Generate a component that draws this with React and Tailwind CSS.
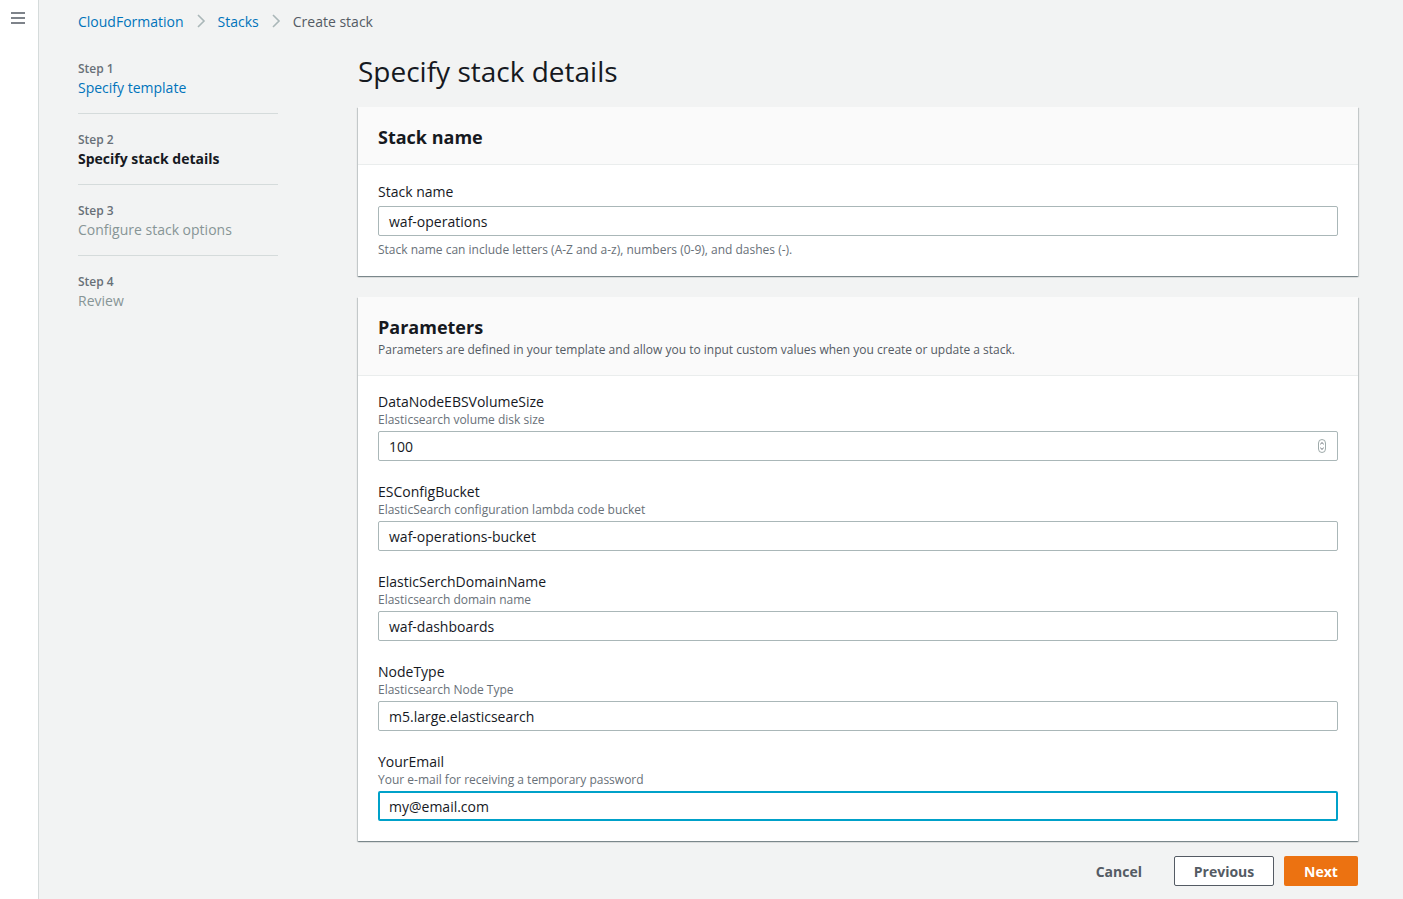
import React from 'react'

const params = [
  { name: 'DataNodeEBSVolumeSize', desc: 'Elasticsearch volume disk size', value: '100', number: true },
  { name: 'ESConfigBucket', desc: 'ElasticSearch configuration lambda code bucket', value: 'waf-operations-bucket' },
  { name: 'ElasticSerchDomainName', desc: 'Elasticsearch domain name', value: 'waf-dashboards' },
  { name: 'NodeType', desc: 'Elasticsearch Node Type', value: 'm5.large.elasticsearch' },
  { name: 'YourEmail', desc: 'Your e-mail for receiving a temporary password', value: 'my@email.com', focused: true }
]

const steps = [
  { step: 'Step 1', title: 'Specify template', cls: 'text-[#0073bb] font-medium' },
  { step: 'Step 2', title: 'Specify stack details', cls: 'text-[#16191f] font-bold' },
  { step: 'Step 3', title: 'Configure stack options', cls: 'text-[#879596] font-medium' },
  { step: 'Step 4', title: 'Review', cls: 'text-[#879596] font-medium' }
]

const Chevron = () => (
  <svg width="10" height="16" viewBox="0 0 10 16" className="mx-3">
    <path d="M2 2l6 6-6 6" fill="none" stroke="#aab7b8" strokeWidth="1.6" />
  </svg>
)

const Input = ({ value, number, focused }) => (
  <div
    className={
      'h-[30px] bg-white rounded-[2px] flex items-center px-[10px] text-[14px] text-[#16191f] ' +
      (focused ? 'border-2 border-[#00a1c9] pl-[9px]' : 'border border-[#aab7b8]')
    }
  >
    <span className="flex-1">{value}</span>
    {number && (
      <svg width="8" height="14" viewBox="0 0 8 14" className="mr-[1px]">
        <rect x="0.5" y="0.5" width="7" height="13" rx="3.5" fill="none" stroke="#879596" strokeWidth="0.8" />
        <path d="M2.3 5.2L4 3.6l1.7 1.6M2.3 8.8L4 10.4l1.7-1.6" fill="none" stroke="#545b64" strokeWidth="0.9" />
      </svg>
    )}
  </div>
)

const cardShadow = 'bg-white shadow-[0_1px_1px_0_rgba(0,28,36,0.3),1px_1px_1px_0_rgba(0,28,36,0.15),-1px_1px_1px_0_rgba(0,28,36,0.15)]'

export default function App() {
  return (
    <div className="flex min-h-[899px] bg-[#f2f3f3] text-[#16191f]" style={{ fontFamily: '"Open Sans", "Noto Sans", sans-serif' }}>
      {/* collapsed nav */}
      <div className="w-[39px] shrink-0 bg-white border-r border-[#d5dbdb] pt-[12px] flex justify-center pr-[3px]">
        <svg width="14" height="12" viewBox="0 0 14 12">
          <path d="M0 1h14M0 6h14M0 11h14" stroke="#545b64" strokeWidth="1.6" />
        </svg>
      </div>

      <div className="flex-1 pl-[39px] pr-[45px]">
        {/* breadcrumb */}
        <div className="flex items-center h-[42px] text-[14px] font-medium">
          <span className="text-[#0073bb]">CloudFormation</span>
          <Chevron />
          <span className="text-[#0073bb]">Stacks</span>
          <Chevron />
          <span className="text-[#545b64]">Create stack</span>
        </div>

        <div className="flex">
          {/* steps */}
          <div className="w-[200px] shrink-0 mr-[80px] pt-[19px]">
            {steps.map((s, i) => (
              <div key={s.step} className={i < steps.length - 1 ? 'border-b border-[#d5dbdb] pb-[14px] mb-[18px]' : ''}>
                <div className="text-[12px] text-[#687078] font-semibold leading-[16px]">{s.step}</div>
                <div className={'text-[14px] leading-[22px] ' + s.cls}>{s.title}</div>
              </div>
            ))}
          </div>

          {/* main */}
          <div className="flex-1">
            <h1 className="text-[28px] leading-[36px] text-[#16191f] pt-[11px] pb-[18px]">Specify stack details</h1>

            <div className={cardShadow}>
              <div className="bg-[#fafafa] border-b border-[#eaeded] h-[58px] flex items-center px-[20px] pt-[3px]">
                <h2 className="text-[18px] font-bold">Stack name</h2>
              </div>
              <div className="px-[20px] pt-[16px] pb-[18px]">
                <div className="text-[14px] leading-[22px] mb-[3px]">Stack name</div>
                <Input value="waf-operations" />
                <div className="text-[12px] text-[#687078] leading-[16px] mt-[6px] font-medium">
                  Stack name can include letters (A-Z and a-z), numbers (0-9), and dashes (-).
                </div>
              </div>
            </div>

            <div className={'mt-[21px] ' + cardShadow}>
              <div className="bg-[#fafafa] border-b border-[#eaeded] h-[79px] px-[20px] pt-[18px]">
                <h2 className="text-[18px] font-bold leading-[24px]">Parameters</h2>
                <div className="text-[12px] text-[#545b64] leading-[16px] mt-[3px] font-medium">
                  Parameters are defined in your template and allow you to input custom values when you create or update a stack.
                </div>
              </div>
              <div className="px-[20px] pt-[15px] pb-[20px] flex flex-col gap-[20px]">
                {params.map((p) => (
                  <div key={p.name}>
                    <div className="text-[14px] leading-[21px]">{p.name}</div>
                    <div className="text-[12px] text-[#687078] leading-[16px] mb-[3px] font-medium">{p.desc}</div>
                    <Input value={p.value} number={p.number} focused={p.focused} />
                  </div>
                ))}
              </div>
            </div>

            <div className="flex justify-end items-center mt-[15px] text-[14px] font-bold">
              <button className="px-[20px] h-[30px] text-[#545b64] mr-[12px]">Cancel</button>
              <button className="w-[100px] h-[30px] border border-[#545b64] rounded-[2px] bg-white text-[#545b64] mr-[10px]">Previous</button>
              <button className="w-[74px] h-[30px] rounded-[2px] bg-[#ec7211] text-white">Next</button>
            </div>
          </div>
        </div>
      </div>
    </div>
  )
}
